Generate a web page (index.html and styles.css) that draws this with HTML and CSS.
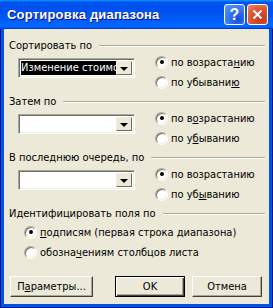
FILE: index.html
```html
<!DOCTYPE html>
<html lang="ru">
<head>
    <meta charset="UTF-8">
    <meta name="viewport" content="width=device-width, initial-scale=1.0">
    <title>Сортировка диапазона</title>
    <link rel="stylesheet" href="styles.css">
</head>
<body>
    <div class="window">
        <div class="titlebar">
            <span class="title">Сортировка диапазона</span>
            <div class="tb-buttons">
                <span class="tb-btn help">?</span>
                <span class="tb-btn close">
                    <svg width="11" height="11" viewBox="0 0 11 11"><path d="M1.5 1.5l8 8M9.5 1.5l-8 8" stroke="#fff" stroke-width="2" fill="none"/></svg>
                </span>
            </div>
        </div>

        <div class="client">
            <div class="group">
                <div class="group-head"><span>Сортировать по</span><i class="rule"></i></div>
                <div class="group-row">
                    <div class="combo">
                        <div class="combo-field selected"><span>Изменение стоимости</span></div>
                        <div class="combo-btn"><i class="arrow"></i></div>
                    </div>
                    <div class="radios">
                        <label class="radio"><span class="dot checked"></span>по возраста<u>н</u>ию</label>
                        <label class="radio"><span class="dot"></span>по убывани<u>ю</u></label>
                    </div>
                </div>
            </div>

            <div class="group">
                <div class="group-head"><span>Затем по</span><i class="rule"></i></div>
                <div class="group-row">
                    <div class="combo">
                        <div class="combo-field"></div>
                        <div class="combo-btn"><i class="arrow"></i></div>
                    </div>
                    <div class="radios">
                        <label class="radio"><span class="dot checked"></span>по в<u>о</u>зрастанию</label>
                        <label class="radio"><span class="dot"></span>по у<u>б</u>ыванию</label>
                    </div>
                </div>
            </div>

            <div class="group">
                <div class="group-head"><span>В последнюю очередь, по</span><i class="rule"></i></div>
                <div class="group-row">
                    <div class="combo">
                        <div class="combo-field"></div>
                        <div class="combo-btn"><i class="arrow"></i></div>
                    </div>
                    <div class="radios">
                        <label class="radio"><span class="dot checked"></span>по возрастанию</label>
                        <label class="radio"><span class="dot"></span>по уб<u>ы</u>ванию</label>
                    </div>
                </div>
            </div>

            <div class="group-head"><span>Идентифицировать поля по</span><i class="rule"></i></div>
            <div class="radios ident">
                <label class="radio"><span class="dot checked"></span><u>п</u>одписям (первая строка диапазона)</label>
                <label class="radio"><span class="dot"></span>обозна<u>ч</u>ениям столбцов листа</label>
            </div>

            <div class="actions">
                <button class="btn wide">П<u>а</u>раметры...</button>
                <button class="btn default">OK</button>
                <button class="btn">Отмена</button>
            </div>
        </div>
    </div>
</body>
</html>
```

FILE: styles.css
```css
body {
    margin: 0;
    font-family: "DejaVu Sans Condensed", "Liberation Sans", sans-serif;
    font-size: 11px;
    color: #000;
}
.window {
    width: 273px;
    height: 308px;
    box-sizing: border-box;
    padding: 0 4px 4px;
    background: #0054e3;
    box-shadow: inset 1px 0 #00138c, inset -1px 0 #00138c, inset 0 -1px #00138c;
}
.titlebar {
    height: 29px;
    margin: 0 -4px;
    padding: 0 5px 0 7px;
    display: flex;
    align-items: center;
    justify-content: space-between;
    background: linear-gradient(180deg, #0997ff, #0053ee 8%, #0050ee 40%, #06f 88%, #06f 93%, #005bff 95%, #003dd7 96%, #003dd7);
}
.title {
    font-family: "Liberation Sans", sans-serif;
    font-weight: bold;
    font-size: 13px;
    color: #fff;
    text-shadow: 1px 1px #0f1089;
    letter-spacing: 0.2px;
}
.tb-buttons {
    display: flex;
    gap: 2px;
}
.tb-btn {
    width: 21px;
    height: 21px;
    box-sizing: border-box;
    border: 1px solid #fff;
    border-radius: 3px;
    display: flex;
    align-items: center;
    justify-content: center;
}
.help {
    background: radial-gradient(circle at 70% 75%, #1a4ee0, #3b7cf7 60%, #5e9bff);
    color: #fff;
    font-family: "Liberation Sans", sans-serif;
    font-weight: bold;
    font-size: 16px;
}
.close {
    background: radial-gradient(circle at 70% 75%, #c3381a, #e05a33 60%, #ef8a68);
}
.client {
    height: 275px;
    box-sizing: border-box;
    background: #ece9d8;
    padding: 10px 0 7px 5px;
}
.group {
    margin-bottom: 3px;
}
.group-head {
    display: flex;
    align-items: center;
    height: 13px;
    line-height: 13px;
}
.rule {
    flex: 1;
    height: 0;
    margin: 1px 4px 0 7px;
    border-top: 1px solid #aca899;
    border-bottom: 1px solid #fff;
}
.group-row {
    display: flex;
    align-items: flex-start;
    padding-left: 9px;
}
.combo {
    width: 117px;
    height: 20px;
    margin-top: 6px;
    box-sizing: border-box;
    display: flex;
    padding: 2px;
    background: #fff;
    border: 1px solid;
    border-color: #aca899 #fff #fff #aca899;
    box-shadow: inset 1px 1px #716f64, inset -1px -1px #f1efe2;
}
.combo-field {
    flex: 1;
    overflow: hidden;
    white-space: nowrap;
    line-height: 14px;
}
.combo-field.selected {
    background: #000;
    color: #fff;
}
.combo-btn {
    width: 16px;
    box-sizing: border-box;
    background: #ece9d8;
    border: 1px solid;
    border-color: #f1efe2 #716f64 #716f64 #f1efe2;
    display: flex;
    align-items: center;
    justify-content: center;
}
.arrow {
    width: 0;
    height: 0;
    border-left: 4px solid transparent;
    border-right: 4px solid transparent;
    border-top: 4px solid #000;
    margin-top: 1px;
}
.radios {
    margin-left: 20px;
}
.radios.ident {
    margin: 2px 0 0 15px;
}
.radio {
    display: flex;
    align-items: center;
    height: 20px;
    white-space: nowrap;
}
.dot {
    width: 13px;
    height: 13px;
    box-sizing: border-box;
    margin-right: 3px;
    border-radius: 50%;
    background: #fff;
    border: 1px solid;
    border-color: #aca899 #fff #fff #aca899;
    box-shadow: inset 1px 1px #716f64, inset -1px -1px #f1efe2;
    display: flex;
    align-items: center;
    justify-content: center;
}
.dot.checked::after {
    content: "";
    width: 4px;
    height: 4px;
    border-radius: 50%;
    background: #000;
}
.actions {
    display: flex;
    margin: 14px 7px 0 1px;
}
.btn {
    width: 70px;
    height: 21px;
    padding: 0;
    font: inherit;
    color: #000;
    background: #ece9d8;
    border: 1px solid;
    border-color: #fff #404040 #404040 #fff;
    box-shadow: inset -1px -1px #aca899;
}
.btn.wide {
    width: 83px;
    margin-right: auto;
}
.btn.default {
    margin-right: 7px;
    border-color: #000;
    box-shadow: inset 1px 1px #fff, inset -1px -1px #404040, inset -2px -2px #aca899;
}
```
